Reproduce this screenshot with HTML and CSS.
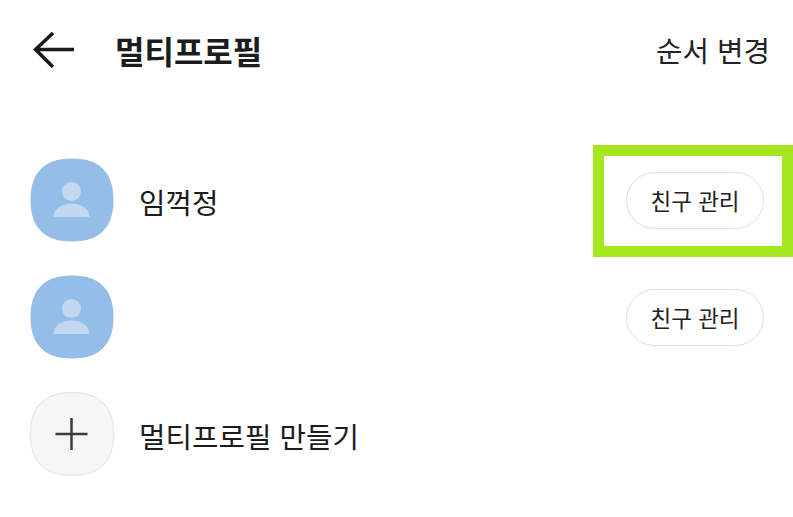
FILE: index.html
```html
<!DOCTYPE html>
<html lang="ko">
<head>
<meta charset="utf-8">
<title>멀티프로필</title>
<link rel="stylesheet" href="styles.css">
</head>
<body>
<div class="screen">
  <header class="header">
    <svg class="back" viewBox="0 0 42 36" aria-hidden="true"><path d="M41 17.500H2.500M20 1 2.500 17.500 20 35"/></svg>
    <h1 class="title">멀티프로필</h1>
    <span class="order">순서 변경</span>
  </header>
  <ul class="list">
    <li class="row">
      <svg class="avatar" viewBox="0 0 84 84" aria-hidden="true"><path class="sq-blue" d="M42 .5C57 .5 67 4.500 73 11C79.500 17 83.500 27 83.500 42C83.500 57 79.500 67 73 73C67 79.500 57 83.500 42 83.500C27 83.500 17 79.500 11 73C4.500 67 .5 57 .5 42C.5 27 4.500 17 11 11C17 4.500 27 .5 42 .5Z"/><circle class="person" cx="41.500" cy="33.500" r="9.500"/><path class="person" d="M23.500 59c0-8 8-13.500 18-13.500S59.500 51 59.500 59Z"/></svg>
      <span class="name">임꺽정</span>
      <span class="action highlighted"><button class="pill">친구 관리</button></span>
    </li>
    <li class="row">
      <svg class="avatar" viewBox="0 0 84 84" aria-hidden="true"><path class="sq-blue" d="M42 .5C57 .5 67 4.500 73 11C79.500 17 83.500 27 83.500 42C83.500 57 79.500 67 73 73C67 79.500 57 83.500 42 83.500C27 83.500 17 79.500 11 73C4.500 67 .5 57 .5 42C.5 27 4.500 17 11 11C17 4.500 27 .5 42 .5Z"/><circle class="person" cx="41.500" cy="33.500" r="9.500"/><path class="person" d="M23.500 59c0-8 8-13.500 18-13.500S59.500 51 59.500 59Z"/></svg>
      <span class="name"></span>
      <span class="action"><button class="pill">친구 관리</button></span>
    </li>
    <li class="row">
      <svg class="avatar" viewBox="0 0 84 84" aria-hidden="true"><path class="sq-grey" d="M42 .5C57 .5 67 4.500 73 11C79.500 17 83.500 27 83.500 42C83.500 57 79.500 67 73 73C67 79.500 57 83.500 42 83.500C27 83.500 17 79.500 11 73C4.500 67 .5 57 .5 42C.5 27 4.500 17 11 11C17 4.500 27 .5 42 .5Z"/><path class="plus" d="M41.500 26v32M25.500 42h32"/></svg>
      <span class="name">멀티프로필 만들기</span>
    </li>
  </ul>
</div>
</body>
</html>
```
FILE: styles.css
```css
* { box-sizing: border-box; }
html, body { margin: 0; padding: 0; background: #fff; }
body { font-family: "Noto Sans CJK KR", "Noto Sans", sans-serif; color: #1c1c1c; }
.screen { width: 793px; height: 517px; overflow: hidden; padding-top: 32px; }
.header { display: flex; align-items: center; height: 36px; padding: 0 23px 0 33px; }
.back { width: 42px; height: 36px; flex: none; fill: none; stroke: #1a1a1a; stroke-width: 3.500; }
.title { margin: 0 0 0 40px; font-size: 32px; font-weight: 700; line-height: 36px; letter-spacing: 0; flex: 1; }
.order { font-size: 28.800px; line-height: 36px; color: #222; }
.list { list-style: none; margin: 90px 0 0; padding: 0 29px 0 29.500px; display: flex; flex-direction: column; gap: 33px; }
.row { display: flex; align-items: center; height: 84px; }
.avatar { width: 84px; height: 84px; flex: none; }
.sq-blue { fill: #94bde7; }
.sq-grey { fill: #f6f6f6; stroke: #e2e2e2; stroke-width: 1; }
.person { fill: #c3d8f0; }
.plus { fill: none; stroke: #3c3c3c; stroke-width: 2.500; }
.name { margin-left: 25.500px; padding-top: 4px; font-size: 28.800px; line-height: 36px; flex: 1; color: #1c1c1c; }
.action { position: relative; display: block; }
.highlighted::after { content: ""; box-sizing: border-box; position: absolute; left: -33px; top: -27px; width: 200px; height: 112px; border: 11px solid #a5e61e; pointer-events: none; }
.pill { display: block; width: 138px; height: 57px; padding: 0; border: 1.500px solid #e0e0e0; border-radius: 29px; background: #fff; font: 400 22.500px "Noto Sans CJK KR", sans-serif; color: #222; }
```
